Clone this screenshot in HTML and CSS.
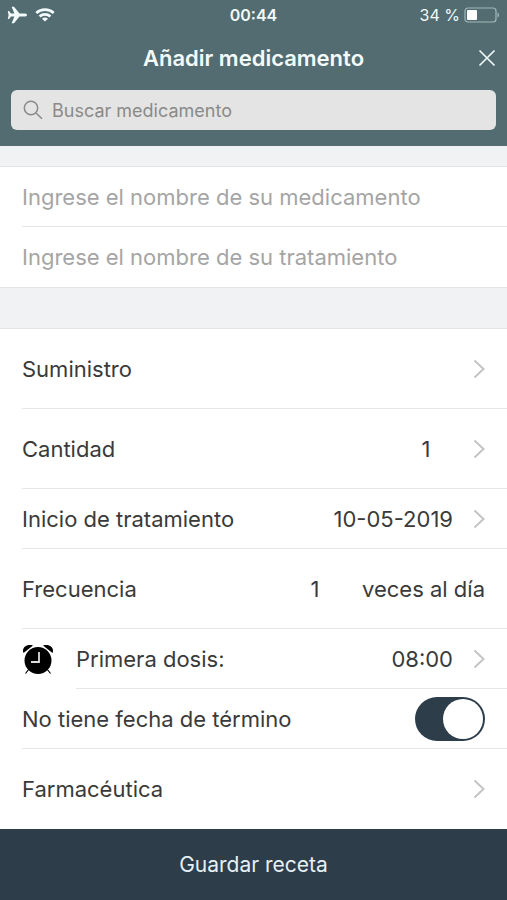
FILE: index.html
```html
<!DOCTYPE html>
<html lang="es">
<head>
    <meta charset="UTF-8">
    <meta name="viewport" content="width=device-width, initial-scale=1.0">
    <title>Añadir medicamento</title>
    <link rel="stylesheet" href="styles.css">
</head>
<body>

<header class="header">
    <div class="status-bar">
        <div class="status-left">
            <svg width="20" height="18" viewBox="0 0 20 18" fill="#f2fafa">
                <path d="M20 9C20 7.900 18.500 7.500 17 7.500H12.500L7 .8H4.600L7.400 7.500H4L2 5H.8L1.600 9L.8 13H2L4 10.500H7.400L4.600 17.200H7L12.500 10.500H17C18.500 10.500 20 10.100 20 9Z"/>
            </svg>
            <svg width="20" height="14" viewBox="0 0 20 14" fill="none" stroke="#f2fafa" stroke-width="2.700">
                <path d="M1.300 5C6 .6 14 .6 18.700 5"/>
                <path d="M4.600 8.400C7.600 5.600 12.400 5.600 15.400 8.400"/>
                <path d="M10 13.600L7 10.700C8.700 9.200 11.300 9.200 13 10.700Z" fill="#f2fafa" stroke="none"/>
            </svg>
        </div>
        <span class="status-time">00:44</span>
        <div class="status-right">
            <span>34 %</span>
            <svg width="36" height="16" viewBox="0 0 36 16">
                <rect x="1" y="1" width="31" height="14" rx="3" fill="none" stroke="#a3b8ba" stroke-width="1.200"/>
                <rect x="3" y="3" width="10" height="10" rx="1" fill="#fff"/>
                <path d="M33.500 5.500C35.500 6 35.500 10 33.500 10.500Z" fill="#a3b8ba"/>
            </svg>
        </div>
    </div>
    <div class="title-bar">
        <h1>Añadir medicamento</h1>
        <button type="button" class="close-button" aria-label="Cerrar">
            <svg width="18" height="18" viewBox="0 0 18 18" fill="none" stroke="#eef8f8" stroke-width="1.700">
                <path d="M1.500 1.500L16.500 16.500M16.500 1.500L1.500 16.500"/>
            </svg>
        </button>
    </div>
    <label class="search">
        <svg width="20" height="20" viewBox="0 0 20 20" fill="none" stroke="#8a8a8a" stroke-width="1.500">
            <circle cx="8" cy="8" r="6.700"/>
            <path d="M13 13L19 18.800"/>
        </svg>
        <input type="search" placeholder="Buscar medicamento" aria-label="Buscar medicamento">
    </label>
</header>

<form class="form" id="recetaForm">
    <div class="group">
        <div class="row">
            <input type="text" class="text-input" placeholder="Ingrese el nombre de su medicamento" aria-label="Nombre del medicamento">
        </div>
        <div class="row">
            <input type="text" class="text-input" placeholder="Ingrese el nombre de su tratamiento" aria-label="Nombre del tratamiento">
        </div>
    </div>

    <div class="group">
        <button type="button" class="row tall">
            <span class="row-label">Suministro</span>
            <svg class="chevron" viewBox="0 0 12 20"><path d="M1.500 1.500L10.500 10L1.500 18.500"/></svg>
        </button>
        <button type="button" class="row tall">
            <span class="row-label">Cantidad</span>
            <span class="value">1</span>
            <svg class="chevron" viewBox="0 0 12 20"><path d="M1.500 1.500L10.500 10L1.500 18.500"/></svg>
        </button>
        <button type="button" class="row">
            <span class="row-label">Inicio de tratamiento</span>
            <span class="value">10-05-2019</span>
            <svg class="chevron" viewBox="0 0 12 20"><path d="M1.500 1.500L10.500 10L1.500 18.500"/></svg>
        </button>
        <div class="row tall">
            <label class="row-label" for="frecuencia">Frecuencia</label>
            <input type="text" class="value number-input" id="frecuencia" inputmode="numeric" value="1">
            <span>veces al día</span>
        </div>
        <div class="icon-row">
            <svg width="32" height="32" viewBox="0 0 32 32">
                <path d="M1.500 10C-.5 5 4 .5 11 2.500Z"/>
                <path d="M30.500 10C32.500 5 28 .5 21 2.500Z"/>
                <path d="M7 26L3.500 30.500M25 26L28.500 30.500" stroke="#000" stroke-width="1.200"/>
                <circle cx="16" cy="17.500" r="13.500"/>
                <path d="M17 9V19H9" fill="none" stroke="#ddd" stroke-width="1.800"/>
            </svg>
            <button type="button" class="row">
                <span class="row-label">Primera dosis:</span>
                <span class="value">08:00</span>
                <svg class="chevron" viewBox="0 0 12 20"><path d="M1.500 1.500L10.500 10L1.500 18.500"/></svg>
            </button>
        </div>
        <div class="row">
            <label class="row-label" for="sinTermino">No tiene fecha de término</label>
            <input type="checkbox" class="switch" id="sinTermino" checked>
        </div>
        <button type="button" class="row tall">
            <span class="row-label">Farmacéutica</span>
            <svg class="chevron" viewBox="0 0 12 20"><path d="M1.500 1.500L10.500 10L1.500 18.500"/></svg>
        </button>
    </div>
</form>

<button type="submit" form="recetaForm" class="save-button">Guardar receta</button>

</body>
</html>
```
FILE: styles.css
```css
* {
    box-sizing: border-box;
}

body {
    font-family: Inter, "Liberation Sans", sans-serif;
    font-size: 22px;
    background-color: #f0f2f4;
    color: #3a3a3a;
    margin: 0;
    min-height: 100vh;
    display: flex;
    flex-direction: column;
}

button,
input {
    font: inherit;
    color: inherit;
    background: none;
    border: none;
    margin: 0;
    padding: 0;
}

button {
    cursor: pointer;
}

svg {
    display: block;
    flex: none;
}

/* Header */
.header {
    background-color: #526c71;
    color: #f2fafa;
    padding: 0 11px 16px;
}

.status-bar {
    display: grid;
    grid-template-columns: 1fr auto 1fr;
    align-items: center;
    height: 30px;
    margin: 0 -4px;
    font-size: 16px;
}

.status-left,
.status-right {
    display: flex;
    align-items: center;
    gap: 8px;
}

.status-right {
    justify-content: flex-end;
    gap: 4px;
}

.status-time {
    font-weight: 600;
}

.title-bar {
    display: grid;
    grid-template-columns: 1fr auto 1fr;
    align-items: center;
    height: 60px;
    padding-bottom: 4px;
}

.title-bar h1 {
    grid-column: 2;
    margin: 0;
    font-size: 22px;
    font-weight: 600;
}

.close-button {
    justify-self: end;
}

.search {
    display: flex;
    align-items: center;
    gap: 9px;
    height: 40px;
    padding: 0 12px;
    background-color: #e4e4e4;
    border-radius: 6px;
}

.search input {
    flex: 1;
    min-width: 0;
    font-size: 18px;
    color: #3a3a3a;
    outline: none;
    appearance: none;
}

.search input::placeholder {
    color: #8a8a8a;
}

/* Form groups */
.form {
    flex: 1;
    display: flex;
    flex-direction: column;
    gap: 40px;
    padding-top: 20px;
}

.group {
    background-color: #fff;
    border-top: 1px solid #e2e3e4;
}

.group:first-child {
    border-bottom: 1px solid #e2e3e4;
}

.group:last-child {
    flex: 1;
}

.row {
    display: flex;
    align-items: center;
    width: calc(100% - 22px);
    height: 60px;
    margin-left: 22px;
    padding-right: 22px;
    border-bottom: 1px solid #e6e6e6;
    text-align: left;
}

.row.tall {
    height: 80px;
}

.group > .row:last-child {
    border-bottom: none;
}

.row-label {
    flex: 1;
}

.text-input {
    width: 100%;
    outline: none;
}

.text-input::placeholder {
    color: #a5a5a5;
}

.value {
    min-width: 54px;
    text-align: center;
}

.number-input {
    width: 54px;
    margin-right: 20px;
    outline: none;
}

.chevron {
    width: 12px;
    height: 20px;
    margin-left: 20px;
    fill: none;
    stroke: #c4c4c6;
    stroke-width: 2;
}

.icon-row {
    display: flex;
    align-items: center;
    padding-left: 22px;
}

.icon-row .row {
    flex: 1;
}

/* Switch */
.switch {
    appearance: none;
    display: flex;
    justify-content: flex-end;
    width: 70px;
    height: 44px;
    padding: 2px;
    border-radius: 22px;
    background-color: #c4c4c6;
    cursor: pointer;
}

.switch::before {
    content: "";
    width: 40px;
    height: 40px;
    border-radius: 50%;
    background-color: #fff;
}

.switch:checked {
    background-color: #2d3d4a;
}

.switch:not(:checked) {
    justify-content: flex-start;
}

.save-button {
    height: 71px;
    background-color: #2d3d4a;
    color: #e6f0f5;
    font-size: 21px;
}
```
